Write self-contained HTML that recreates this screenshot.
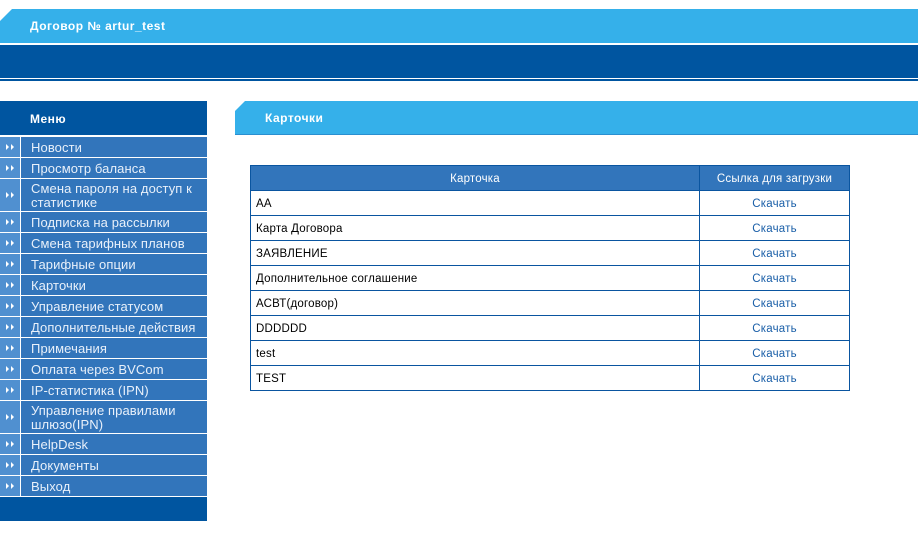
<!DOCTYPE html>
<html><head><meta charset="utf-8"><style>
body{margin:0;width:918px;height:536px;background:#fff;font-family:"Liberation Sans","DejaVu Sans",sans-serif;position:relative;overflow:hidden}
.abs{position:absolute}
.top{left:0;top:9px;width:918px;height:34px;background:#35b0ea;clip-path:polygon(12px 0,100% 0,100% 100%,0 100%,0 12px)}
.top span{position:absolute;left:30px;top:10px;color:#fff;font-weight:bold;font-size:12px;letter-spacing:0.5px}
.dark{left:0;top:45px;width:918px;height:33px;background:#0055a0}
.line{left:0;top:79px;width:918px;height:2px;background:#0055a0}
.mh{left:0;top:101px;width:207px;height:34px;background:#0055a0;color:#fff;font-weight:bold;font-size:12px;letter-spacing:0.5px}
.mh span{position:absolute;left:30px;top:11px}
.menu{left:0;top:137px;width:207px}
.it{display:flex;margin-bottom:1px;background:#3275bb;color:#e8f0fa;font-size:13px;letter-spacing:0.1px}
.ic{width:20px;background:#5090d0;border-right:1px solid #fff;position:relative;flex:none}
.ic i{position:absolute;top:50%;margin-top:-3px;width:0;height:0;border-left:3px solid #fff;border-top:3px solid transparent;border-bottom:3px solid transparent}
.tx{padding:1px 0 0 10px;line-height:14px;display:flex;align-items:center;min-height:19px}
.mb{left:0;top:497px;width:207px;height:24px;background:#0055a0}
.ch{left:235px;top:101px;width:683px;height:33px;background:#35b0ea;border-bottom:1px solid #2a8fd0;clip-path:polygon(10px 0,100% 0,100% 100%,0 100%,0 10px)}
.ch span{position:absolute;left:30px;top:10px;color:#fff;font-weight:bold;font-size:12px;letter-spacing:0.5px}
table{position:absolute;left:250px;top:165px;width:600px;border-collapse:collapse;font-size:11.5px;letter-spacing:0.2px}
td,th{border:1px solid #0a55a0;height:23px;padding:1px 5px 0;box-sizing:border-box;line-height:14px}
tr{height:25px}
th{background:#3275bb;color:#fff;font-weight:normal}
td.l{text-align:center;color:#1a5fa8;width:150px}
</style></head><body>
<div class="abs top"><span>Договор № artur_test</span></div>
<div class="abs dark"></div>
<div class="abs line"></div>
<div class="abs mh"><span>Меню</span></div>
<div class="abs menu">
<div class="it"><div class="ic"><i style="left:6px"></i><i style="left:11px"></i></div><div class="tx">Новости</div></div>
<div class="it"><div class="ic"><i style="left:6px"></i><i style="left:11px"></i></div><div class="tx">Просмотр баланса</div></div>
<div class="it" style="height:32px"><div class="ic"><i style="left:6px"></i><i style="left:11px"></i></div><div class="tx">Смена пароля на доступ к статистике</div></div>
<div class="it"><div class="ic"><i style="left:6px"></i><i style="left:11px"></i></div><div class="tx">Подписка на рассылки</div></div>
<div class="it"><div class="ic"><i style="left:6px"></i><i style="left:11px"></i></div><div class="tx">Смена тарифных планов</div></div>
<div class="it"><div class="ic"><i style="left:6px"></i><i style="left:11px"></i></div><div class="tx">Тарифные опции</div></div>
<div class="it"><div class="ic"><i style="left:6px"></i><i style="left:11px"></i></div><div class="tx">Карточки</div></div>
<div class="it"><div class="ic"><i style="left:6px"></i><i style="left:11px"></i></div><div class="tx">Управление статусом</div></div>
<div class="it"><div class="ic"><i style="left:6px"></i><i style="left:11px"></i></div><div class="tx">Дополнительные действия</div></div>
<div class="it"><div class="ic"><i style="left:6px"></i><i style="left:11px"></i></div><div class="tx">Примечания</div></div>
<div class="it"><div class="ic"><i style="left:6px"></i><i style="left:11px"></i></div><div class="tx">Оплата через BVCom</div></div>
<div class="it"><div class="ic"><i style="left:6px"></i><i style="left:11px"></i></div><div class="tx">IP-статистика (IPN)</div></div>
<div class="it" style="height:32px"><div class="ic"><i style="left:6px"></i><i style="left:11px"></i></div><div class="tx">Управление правилами шлюзо(IPN)</div></div>
<div class="it"><div class="ic"><i style="left:6px"></i><i style="left:11px"></i></div><div class="tx">HelpDesk</div></div>
<div class="it"><div class="ic"><i style="left:6px"></i><i style="left:11px"></i></div><div class="tx">Документы</div></div>
<div class="it"><div class="ic"><i style="left:6px"></i><i style="left:11px"></i></div><div class="tx">Выход</div></div>
</div>
<div class="abs mb"></div>
<div class="abs ch"><span>Карточки</span></div>
<table>
<tr><th>Карточка</th><th>Ссылка для загрузки</th></tr>
<tr><td>AA</td><td class="l">Скачать</td></tr>
<tr><td>Карта Договора</td><td class="l">Скачать</td></tr>
<tr><td>ЗАЯВЛЕНИЕ</td><td class="l">Скачать</td></tr>
<tr><td>Дополнительное соглашение</td><td class="l">Скачать</td></tr>
<tr><td>АСВТ(договор)</td><td class="l">Скачать</td></tr>
<tr><td>DDDDDD</td><td class="l">Скачать</td></tr>
<tr><td>test</td><td class="l">Скачать</td></tr>
<tr><td>TEST</td><td class="l">Скачать</td></tr>
</table>
</body></html>
